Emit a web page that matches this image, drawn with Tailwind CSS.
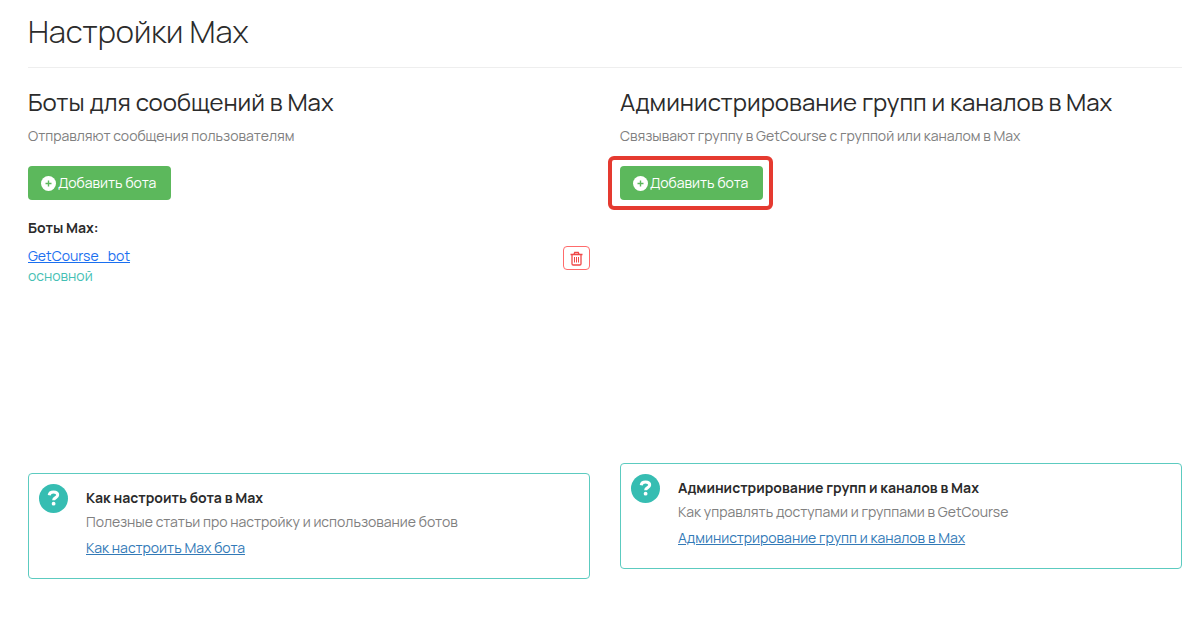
<!DOCTYPE html>
<html lang="ru">
<head>
  <meta charset="UTF-8">
  <meta name="viewport" content="width=device-width, initial-scale=1.0">
  <script src="https://cdn.jsdelivr.net/npm/@tailwindcss/browser@4"></script>
  <title>Настройки Max</title>
</head>
<body class="bg-white font-['Manrope','Inter',sans-serif] text-sm text-[#2b2b2b]">
  <main class="pl-7 pr-[18px] pt-[11px]">
    <h1 class="text-[31px] leading-10 font-light">Настройки Max</h1>
    <hr class="mt-4 border-[#eeeeee]">

    <div class="mt-[19px] grid grid-cols-2 gap-[30px]">
      <!-- Боты для сообщений -->
      <section>
        <h2 class="text-2xl leading-[30px] font-normal whitespace-nowrap">Боты для сообщений в Max</h2>
        <p class="mt-[9px] leading-5 text-[#808080]">Отправляют сообщения пользователям</p>
        <button type="button" class="mt-5 flex h-[34px] items-center gap-[2px] rounded bg-[#5cb85c] pl-[13px] pr-[15px] text-white">
          <svg class="size-[15px]" viewBox="0 0 15 15" aria-hidden="true">
            <circle cx="7.5" cy="7.5" r="7.5" fill="#fff"/>
            <path d="M7.5 4.5v6M4.5 7.5h6" stroke="#5cb85c" stroke-width="1.4"/>
          </svg>
          Добавить бота
        </button>

        <div class="mt-[18px] min-h-[255px]">
          <h3 class="leading-5 font-bold">Боты Max:</h3>
          <div class="mt-2 flex items-start justify-between">
            <div>
              <a href="#" class="block leading-5 text-[#1a6ff0] underline">GetCourse_bot</a>
              <span class="block leading-5 text-[#45bfb4]">основной</span>
            </div>
            <button type="button" aria-label="Удалить бота" class="flex h-6 w-[27px] items-center justify-center rounded border border-[#ff6b6b]">
              <svg class="h-[15px] w-[13px]" viewBox="0 0 13 15" fill="none" stroke="#f04848" aria-hidden="true">
                <path d="M.5 3.5h12M4 3.3l.7-1.8h3.6L9 3.3M2 3.5v9.2q0 1.3 1.2 1.3h6.6q1.2 0 1.2-1.3V3.5" stroke-width="1.3"/>
                <path d="M4.5 6v5.5M6.5 6v5.5M8.5 6v5.5"/>
              </svg>
            </button>
          </div>
        </div>

        <div class="flex min-h-[106px] items-start gap-[18px] rounded border border-[#5ccbc0] p-[10px]">
          <svg class="size-[29px] shrink-0" viewBox="0 0 29 29" fill="none" aria-hidden="true">
            <circle cx="14.5" cy="14.5" r="14.5" fill="#36bdb2"/>
            <path d="M10.2 11.2c.3-2.1 2-3.1 4.3-3.1 2.5 0 4.2 1.1 4.2 3 0 2.6-4.1 2.4-4.1 5.1" stroke="#fff" stroke-width="3"/>
            <circle cx="14.6" cy="19.7" r="1.9" fill="#fff"/>
          </svg>
          <div class="pt-1">
            <h3 class="leading-5 font-bold">Как настроить бота в Max</h3>
            <p class="mt-1 leading-5 text-[#808080]">Полезные статьи про настройку и использование ботов</p>
            <a href="#" class="mt-[6px] block leading-5 text-[#337ab7] underline">Как настроить Max бота</a>
          </div>
        </div>
      </section>

      <!-- Администрирование групп и каналов -->
      <section>
        <h2 class="text-2xl leading-[30px] font-normal whitespace-nowrap">Администрирование групп и каналов в Max</h2>
        <p class="mt-[9px] leading-5 text-[#808080]">Связывают группу в GetCourse с группой или каналом в Max</p>
        <div class="mt-5 min-h-[297px]">
          <div class="relative w-fit">
            <button type="button" class="flex h-[34px] items-center gap-[2px] rounded bg-[#5cb85c] pl-[13px] pr-[15px] text-white">
              <svg class="size-[15px]" viewBox="0 0 15 15" aria-hidden="true">
                <circle cx="7.5" cy="7.5" r="7.5" fill="#fff"/>
                <path d="M7.5 4.5v6M4.5 7.5h6" stroke="#5cb85c" stroke-width="1.4"/>
              </svg>
              Добавить бота
            </button>
            <!-- Рамка-выделение -->
            <div class="pointer-events-none absolute -inset-y-[10px] -left-3 -right-[10px] rounded-md border-4 border-[#e53a30]"></div>
          </div>
        </div>

        <div class="flex min-h-[106px] items-start gap-[18px] rounded border border-[#5ccbc0] p-[10px]">
          <svg class="size-[29px] shrink-0" viewBox="0 0 29 29" fill="none" aria-hidden="true">
            <circle cx="14.5" cy="14.5" r="14.5" fill="#36bdb2"/>
            <path d="M10.2 11.2c.3-2.1 2-3.1 4.3-3.1 2.5 0 4.2 1.1 4.2 3 0 2.6-4.1 2.4-4.1 5.1" stroke="#fff" stroke-width="3"/>
            <circle cx="14.6" cy="19.7" r="1.9" fill="#fff"/>
          </svg>
          <div class="pt-1">
            <h3 class="leading-5 font-bold">Администрирование групп и каналов в Max</h3>
            <p class="mt-1 leading-5 text-[#808080]">Как управлять доступами и группами в GetCourse</p>
            <a href="#" class="mt-[6px] block leading-5 text-[#337ab7] underline">Администрирование групп и каналов в Max</a>
          </div>
        </div>
      </section>
    </div>
  </main>
</body>
</html>
